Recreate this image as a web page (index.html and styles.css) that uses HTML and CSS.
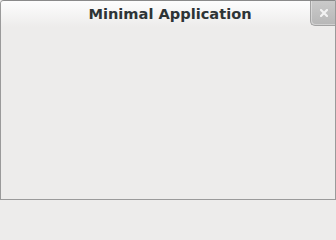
FILE: index.html
```html
<!DOCTYPE html>
<html>
<head>
<meta charset="utf-8">
<link rel="stylesheet" href="styles.css">
</head>
<body>
<div class="window">
  <div class="titlebar">
    <div class="spacer"></div>
    <div class="title">Minimal Application</div>
    <div class="close">
      <svg width="8" height="8" viewBox="0 0 8 8"><path d="M1 1 L7 7 M7 1 L1 7" stroke="#f2f2f2" stroke-width="2.2" stroke-linecap="square"/></svg>
    </div>
  </div>
  <div class="content"></div>
</div>
</body>
</html>
```
FILE: styles.css
```css
html, body {
  margin: 0;
  padding: 0;
  background: #edeceb;
}
.window {
  width: 336px;
  height: 200px;
  box-sizing: border-box;
  border: 1px solid #9a9a9a;
  border-top-color: #8a8a8a;
  border-top-left-radius: 4px;
  background: #edeceb;
  display: flex;
  flex-direction: column;
  overflow: hidden;
}
.titlebar {
  height: 26px;
  display: grid;
  grid-template-columns: 25px 1fr 25px;
  align-items: start;
  background: linear-gradient(#fdfdfd, #edeceb);
}
.title {
  font-family: "DejaVu Sans", sans-serif;
  font-weight: bold;
  font-size: 14.6px;
  color: #2e3436;
  text-align: center;
  line-height: 26px;
  padding-left: 4px;
}
.close {
  height: 25px;
  border-bottom-left-radius: 5px;
  background: linear-gradient(#cacaca, #b7b7b7);
  border-left: 1px solid #a2a2a2;
  border-bottom: 1px solid #a2a2a2;
  box-shadow: inset 1px -1px 0 rgba(255, 255, 255, 0.35);
  box-sizing: border-box;
  display: flex;
  align-items: center;
  justify-content: center;
  padding-left: 1px;
}
.close svg {
  display: block;
}
.content {
  flex: 1;
}
```
